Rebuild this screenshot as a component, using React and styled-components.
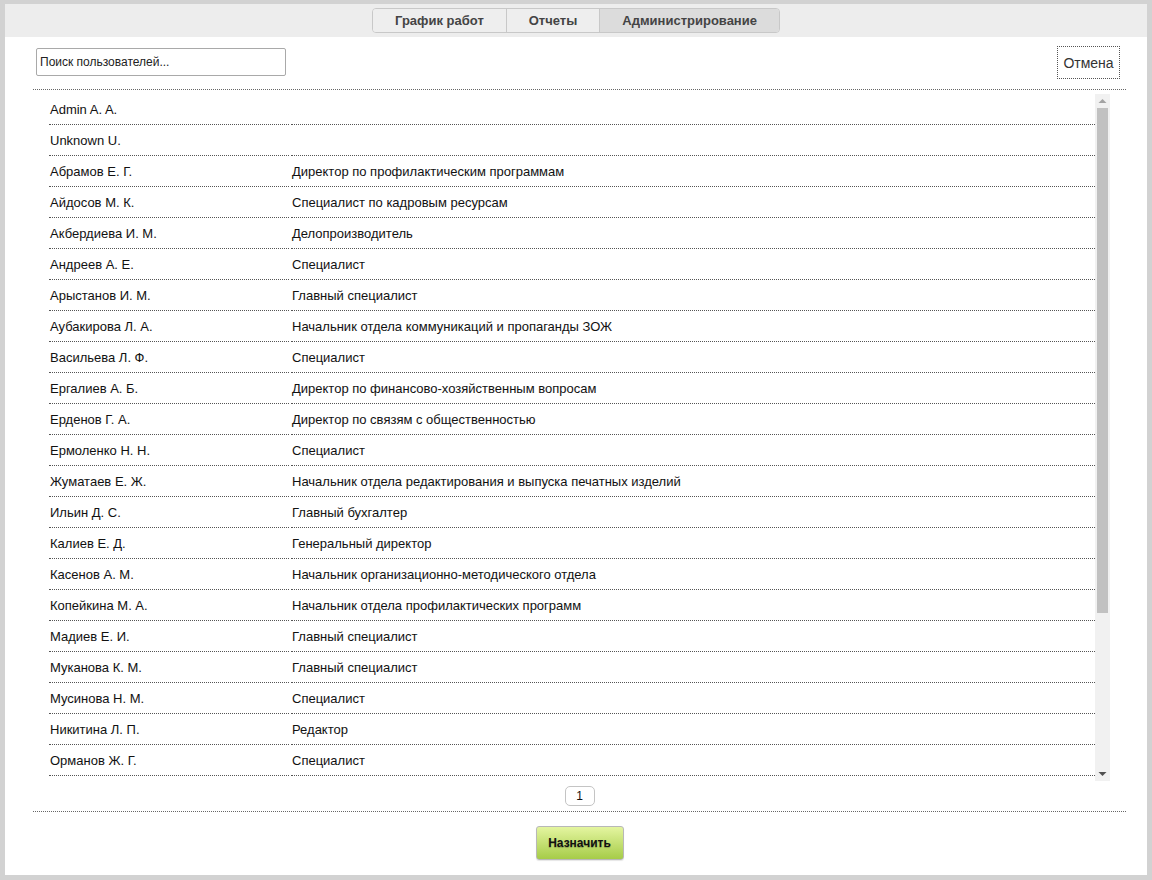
import React from "react"
import styled, { createGlobalStyle } from "styled-components"

const users = [
  ["Admin A. A.", ""],
  ["Unknown U.", ""],
  ["Абрамов Е. Г.", "Директор по профилактическим программам"],
  ["Айдосов М. К.", "Специалист по кадровым ресурсам"],
  ["Акбердиева И. М.", "Делопроизводитель"],
  ["Андреев А. Е.", "Специалист"],
  ["Арыстанов И. М.", "Главный специалист"],
  ["Аубакирова Л. А.", "Начальник отдела коммуникаций и пропаганды ЗОЖ"],
  ["Васильева Л. Ф.", "Специалист"],
  ["Ергалиев А. Б.", "Директор по финансово-хозяйственным вопросам"],
  ["Ерденов Г. А.", "Директор по связям с общественностью"],
  ["Ермоленко Н. Н.", "Специалист"],
  ["Жуматаев Е. Ж.", "Начальник отдела редактирования и выпуска печатных изделий"],
  ["Ильин Д. С.", "Главный бухгалтер"],
  ["Калиев Е. Д.", "Генеральный директор"],
  ["Касенов А. М.", "Начальник организационно-методического отдела"],
  ["Копейкина М. А.", "Начальник отдела профилактических программ"],
  ["Мадиев Е. И.", "Главный специалист"],
  ["Муканова К. М.", "Главный специалист"],
  ["Мусинова Н. М.", "Специалист"],
  ["Никитина Л. П.", "Редактор"],
  ["Орманов Ж. Г.", "Специалист"],
  ["Петрова А. В.", "Специалист"],
  ["Сагинтаева Д. К.", "Бухгалтер"],
  ["Смагулов Т. Н.", "Главный специалист"],
  ["Тулегенов А. С.", "Специалист"],
  ["Умарова Г. Б.", "Специалист"],
  ["Шарипов Р. А.", "Водитель"],
  ["Юсупова С. Е.", "Специалист"],
]

const tabs = [
  { label: "График работ" },
  { label: "Отчеты" },
  { label: "Администрирование", active: true },
]

export default function App() {
  return (
    <>
      <GlobalStyle />
      <Frame>
        <TopBar>
          <Tabs>
            {tabs.map((t) => (
              <Tab key={t.label} $active={t.active}>
                {t.label}
              </Tab>
            ))}
          </Tabs>
        </TopBar>
        <Content>
          <Toolbar>
            <Search placeholder="Поиск пользователей..." />
            <CancelButton>Отмена</CancelButton>
          </Toolbar>
          <ListArea>
            <ListScroll>
              <UserTable>
                <tbody>
                  {users.map(([name, pos]) => (
                    <tr key={name}>
                      <NameCell>{name}</NameCell>
                      <PosCell>{pos}</PosCell>
                    </tr>
                  ))}
                </tbody>
              </UserTable>
            </ListScroll>
            {/* classic scrollbar look */}
            <ScrollBar>
              <ArrowButton>
                <svg width="15" height="14" viewBox="0 0 15 14">
                  <polygon points="3.5,9 11.5,9 7.5,5" fill="#a3a3a3" />
                </svg>
              </ArrowButton>
              <ThumbTrack>
                <Thumb />
              </ThumbTrack>
              <ArrowButton>
                <svg width="15" height="14" viewBox="0 0 15 14">
                  <polygon points="3.5,5 11.5,5 7.5,9" fill="#505050" />
                </svg>
              </ArrowButton>
            </ScrollBar>
          </ListArea>
          <Pager>
            <PageButton>1</PageButton>
          </Pager>
          <Footer>
            <AssignButton>Назначить</AssignButton>
          </Footer>
        </Content>
      </Frame>
    </>
  )
}

const GlobalStyle = createGlobalStyle`
  html, body {
    margin: 0;
    padding: 0;
    background: #d2d2d2;
    font-family: "Liberation Sans", Arial, sans-serif;
  }
  * {
    box-sizing: border-box;
  }
`

const Frame = styled.div`
  margin: 4px 5px 0 5px;
  height: 871px;
  background: #fff;
  display: flex;
  flex-direction: column;
`

const TopBar = styled.div`
  height: 33px;
  background: #ededed;
  display: flex;
  justify-content: center;
  padding-top: 4px;
`

const Tabs = styled.div`
  display: flex;
  height: 25px;
  border: 1px solid #c8c8c8;
  border-radius: 4px;
  overflow: hidden;
`

const Tab = styled.div`
  display: flex;
  align-items: center;
  padding: 0 22px;
  font-size: 13px;
  font-weight: bold;
  color: #444;
  background: ${(p) => (p.$active ? "#dcdcdc" : "#eeeeee")};
  & + & {
    border-left: 1px solid #c8c8c8;
  }
`

const Content = styled.div`
  margin: 0 21px 0 28px;
  display: flex;
  flex-direction: column;
`

const Toolbar = styled.div`
  display: flex;
  justify-content: space-between;
  align-items: flex-start;
  padding: 9px 6px 0 3px;
  height: 53px;
  border-bottom: 1px dotted #666;
`

const Search = styled.input`
  margin-top: 2px;
  width: 250px;
  height: 28px;
  border: 1px solid #a9a9a9;
  border-radius: 2px;
  padding: 0 3px;
  font-family: "Liberation Sans", Arial, sans-serif;
  font-size: 12px;
  color: #222;
  outline: none;
  &::placeholder {
    color: #222;
  }
`

const CancelButton = styled.button`
  height: 33px;
  width: 63px;
  border: 1px dotted #555;
  background: #fff;
  font-family: "Liberation Sans", Arial, sans-serif;
  font-size: 14px;
  color: #333;
  padding: 0;
`

const ListArea = styled.div`
  display: flex;
  margin: 4px 16px 0 14px;
  height: 687px;
`

const ListScroll = styled.div`
  flex: 1;
  overflow-y: scroll;
  overflow-x: hidden;
  scrollbar-width: none;
  &::-webkit-scrollbar {
    display: none;
  }
`

const ScrollBar = styled.div`
  width: 15px;
  background: #f1f1f1;
  display: flex;
  flex-direction: column;
`

const ArrowButton = styled.div`
  height: 14px;
  display: flex;
  svg {
    display: block;
  }
`

const ThumbTrack = styled.div`
  flex: 1;
  padding: 0 2px;
`

const Thumb = styled.div`
  height: 505px;
  background: #c1c1c1;
`

const UserTable = styled.table`
  width: calc(100% + 2px);
  border-collapse: separate;
  border-spacing: 2px 0;
  font-size: 13px;
  color: #111;
`

const NameCell = styled.td`
  width: 240px;
  height: 31px;
  padding: 0 0 0 1px;
  border-bottom: 1px dotted #555;
  vertical-align: middle;
`

const PosCell = styled.td`
  height: 31px;
  padding: 0 0 0 1px;
  border-bottom: 1px dotted #555;
  vertical-align: middle;
`

const Pager = styled.div`
  display: flex;
  justify-content: center;
  padding: 5px 0 5px;
  border-bottom: 1px dotted #666;
`

const PageButton = styled.button`
  width: 30px;
  height: 20px;
  border: 1px solid #c4c4c4;
  border-radius: 5px;
  background: #fff;
  font-family: "Liberation Sans", Arial, sans-serif;
  font-size: 12px;
  color: #111;
  padding: 0;
`

const Footer = styled.div`
  display: flex;
  justify-content: center;
  padding-top: 14px;
`

const AssignButton = styled.button`
  width: 88px;
  height: 34px;
  border: 1px solid #b8b8b8;
  border-radius: 3px;
  background: linear-gradient(#e4f5a0, #a6cc48);
  font-family: "Liberation Sans", Arial, sans-serif;
  font-size: 12px;
  font-weight: bold;
  color: #111;
  text-shadow: 0 1px 1px rgba(0, 0, 0, 0.25);
  box-shadow: 0 1px 1px rgba(0, 0, 0, 0.1);
  padding: 0;
`
